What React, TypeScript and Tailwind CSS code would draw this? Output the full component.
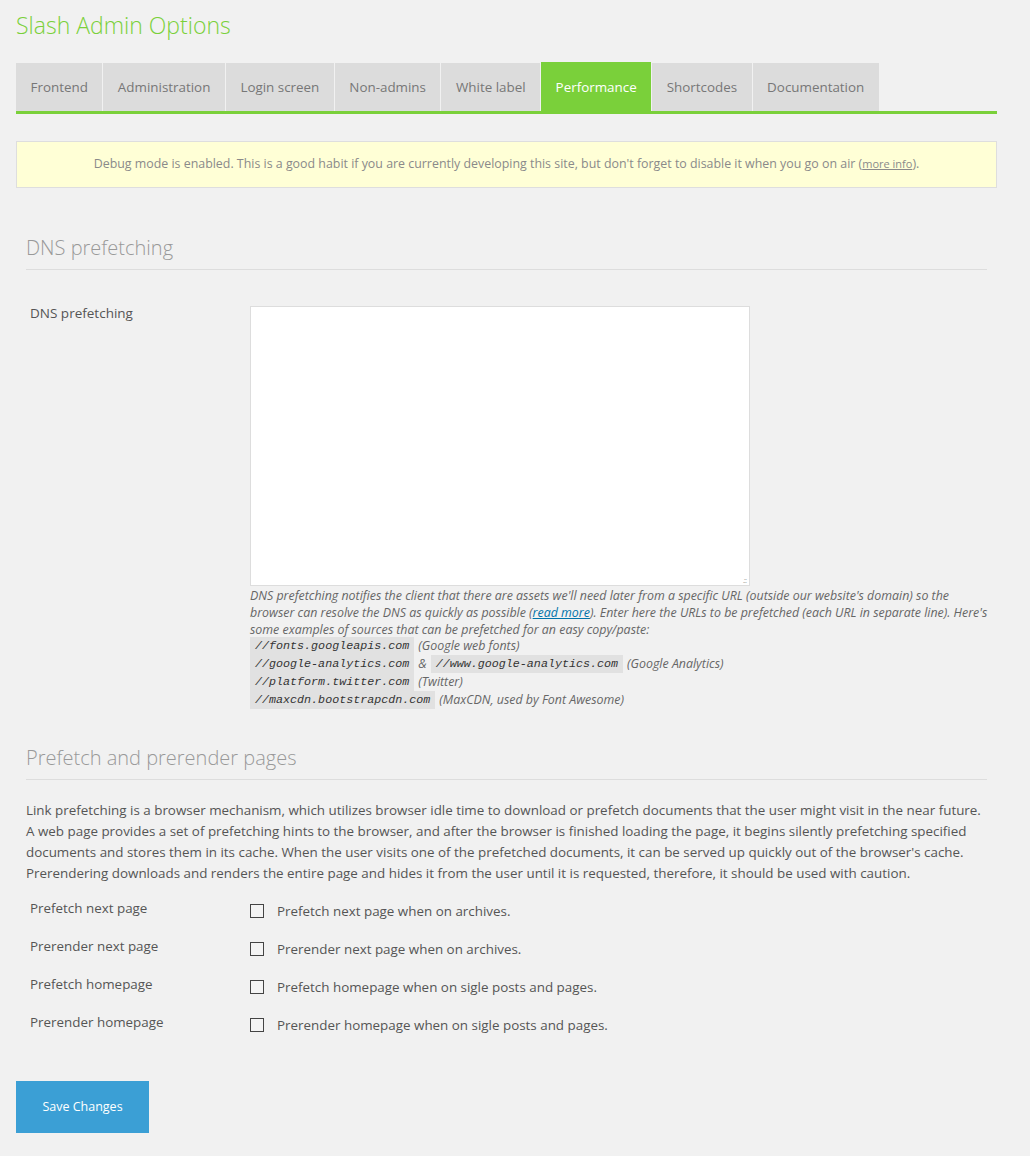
import React from "react";

const tabs = [
  "Frontend",
  "Administration",
  "Login screen",
  "Non-admins",
  "White label",
  "Performance",
  "Shortcodes",
  "Documentation",
];

const rows = [
  ["Prefetch next page", "Prefetch next page when on archives."],
  ["Prerender next page", "Prerender next page when on archives."],
  ["Prefetch homepage", "Prefetch homepage when on sigle posts and pages."],
  ["Prerender homepage", "Prerender homepage when on sigle posts and pages."],
];

function Code({ children }: { children: React.ReactNode }) {
  return (
    <code className="inline-block h-[18px] bg-[#e1e1e1] px-[5px] font-['Liberation_Mono',monospace] text-[11.7px] italic leading-[18px] text-[#333]">
      {children}
    </code>
  );
}

export default function App() {
  return (
    <div className="min-h-[1156px] w-full bg-[#f1f1f1] font-['Open_Sans',sans-serif] text-[#555]">
      <div className="pl-[16px] pr-[33px]">
        <h1 className="pt-[9px] text-[23px] font-light leading-[32px] text-[#7ad03a]">
          Slash Admin Options
        </h1>
        <div className="mt-[21px] flex items-end gap-[1px] border-b-[3px] border-[#7ad03a]">
          {tabs.map((t) => (
            <div
              key={t}
              className={
                t === "Performance"
                  ? "flex h-[49px] items-center bg-[#7ad03a] px-[14.5px] pt-[1px] text-[13.4px] text-white"
                  : "flex h-[48px] items-center bg-[#dcdcdc] px-[14.5px] text-[13.4px] text-[#777]"
              }
            >
              {t}
            </div>
          ))}
        </div>
        <div className="mt-[27px] flex h-[47px] items-center justify-center border border-[#dedede] bg-[#ffffd6] text-[12.4px] text-[#8a8a8a]">
          <span>
            Debug mode is enabled. This is a good habit if you are currently developing this site, but don't forget to
            disable it when you go on air (<span className="text-[11px] underline">more info</span>).
          </span>
        </div>

        <div className="px-[10px]">
          <h2 className="mt-[46px] text-[20px] font-light leading-[28px] text-[#999]">DNS prefetching</h2>
          <div className="mt-[7px] h-[1px] bg-[#dddddd]" />
          <div className="mt-[36px] flex">
            <div className="w-[224px] shrink-0 pl-[4px] text-[13.5px] leading-[14px] text-[#555]">DNS prefetching</div>
            <div className="min-w-0 flex-1">
              <div className="relative h-[280px] w-[500px] border border-[#dddddd] bg-white">
                <span className="absolute bottom-[1px] right-[3px] text-[8px] leading-[8px] tracking-[-1px] text-[#aaa]">
                  .::
                </span>
              </div>
              <p className="mt-[1px] w-[744px] text-[12.4px] italic leading-[17px] text-[#666]">
                DNS prefetching notifies the client that there are assets we'll need later from a specific URL (outside
                our website's domain) so the browser can resolve the DNS as quickly as possible (
                <span className="text-[#0073aa] underline">read more</span>). Enter here the URLs to be prefetched
                (each URL in separate line). Here's some examples of sources that can be prefetched for an easy
                copy/paste:
              </p>
              <div className="mt-[-1px] text-[12.4px] italic leading-[18px] text-[#666]">
                <div className="flex h-[18px] items-center gap-[4px]">
                  <Code>//fonts.googleapis.com</Code>
                  <span>(Google web fonts)</span>
                </div>
                <div className="flex h-[18px] items-center gap-[4px]">
                  <Code>//google-analytics.com</Code>
                  <span>&amp;</span>
                  <Code>//www.google-analytics.com</Code>
                  <span>(Google Analytics)</span>
                </div>
                <div className="flex h-[18px] items-center gap-[4px]">
                  <Code>//platform.twitter.com</Code>
                  <span>(Twitter)</span>
                </div>
                <div className="flex h-[18px] items-center gap-[4px]">
                  <Code>//maxcdn.bootstrapcdn.com</Code>
                  <span>(MaxCDN, used by Font Awesome)</span>
                </div>
              </div>
            </div>
          </div>

          <h2 className="mt-[35px] text-[20px] font-light leading-[28px] text-[#999]">Prefetch and prerender pages</h2>
          <div className="mt-[7px] h-[1px] bg-[#dddddd]" />
        </div>
        <p className="mx-[10px] mt-[20px] text-[13.4px] leading-[21px] text-[#555]">
          Link prefetching is a browser mechanism, which utilizes browser idle time to download or prefetch documents
          that the user might visit in the near future. A web page provides a set of prefetching hints to the browser,
          and after the browser is finished loading the page, it begins silently prefetching specified documents and
          stores them in its cache. When the user visits one of the prefetched documents, it can be served up quickly
          out of the browser's cache. Prerendering downloads and renders the entire page and hides it from the user
          until it is requested, therefore, it should be used with caution.
        </p>
        <div className="mt-[16px] flex flex-col gap-[18px] pl-[14px]">
          {rows.map(([l, d]) => (
            <div key={l} className="flex h-[20px] items-start">
              <div className="w-[220px] shrink-0 text-[13.4px] leading-[16px] text-[#555]">{l}</div>
              <div className="flex items-center pt-[3px]">
                <div className="h-[14px] w-[14px] border border-[#444] bg-[#f4f4f4]" />
                <span className="ml-[13px] text-[13.4px] leading-[16px] text-[#555]">{d}</span>
              </div>
            </div>
          ))}
        </div>
        <button className="mt-[47px] h-[52px] w-[133px] bg-[#3b9fd5] text-[12.5px] text-white">Save Changes</button>
      </div>
    </div>
  );
}
